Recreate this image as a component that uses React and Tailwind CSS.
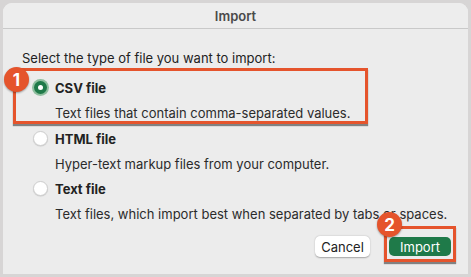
import { useState } from 'react'

const options = [
  { id: 'csv', title: 'CSV file', desc: 'Text files that contain comma-separated values.' },
  { id: 'html', title: 'HTML file', desc: 'Hyper-text markup files from your computer.' },
  { id: 'text', title: 'Text file', desc: 'Text files, which import best when separated by tabs or spaces.' },
]

function Badge({ n, className }) {
  return (
    <div
      className={`absolute w-[25px] h-[25px] rounded-full bg-[#e5542c] text-white text-[17px] font-bold flex items-center justify-center shadow-[0_1px_2px_rgba(0,0,0,0.35)] ${className}`}
    >
      {n}
    </div>
  )
}

function Radio({ checked }) {
  if (checked) {
    return (
      <span className="w-[17px] h-[17px] rounded-full bg-[#8fbf9f] flex items-center justify-center shrink-0">
        <span className="w-[13px] h-[13px] rounded-full bg-[#1f7a49] flex items-center justify-center">
          <span className="w-[5px] h-[5px] rounded-full bg-white" />
        </span>
      </span>
    )
  }
  return (
    <span className="w-[15px] h-[15px] mx-[1px] rounded-full bg-white border border-[#cfcfcf] shadow-[0_0.5px_1px_rgba(0,0,0,0.15)] shrink-0" />
  )
}

function Option({ opt, checked, onSelect, compact }) {
  return (
    <div className="cursor-pointer" onClick={onSelect}>
      <div className="h-[25px] flex items-center gap-[6px]">
        <Radio checked={checked} />
        <span className="font-bold text-[#222]">{opt.title}</span>
      </div>
      <div className={compact ? 'pt-[5px] pl-[23px] text-[#2b2b2b]' : 'h-[25px] flex items-center pl-[23px] text-[#2b2b2b]'}>
        {opt.desc}
      </div>
    </div>
  )
}

export default function App() {
  const [selected, setSelected] = useState('csv')

  return (
    <div className="w-[471px] h-[277px] bg-[#d7d5d5] pt-[3px] pl-[3px] overflow-hidden" style={{ fontFamily: 'Inter, "Noto Sans", sans-serif' }}>
      <div className="w-[465px] h-[271px] bg-[#ececec] rounded-t-[9px] flex flex-col text-[13px] leading-4">
        <div className="h-[26px] shrink-0 border-b border-[#c9c9c9] flex items-center justify-center font-semibold text-[#4a4a4a] bg-[#ededed] rounded-t-[9px]">
          Import
        </div>

        <div className="pl-[19px] pt-[21px] text-[#222]">Select the type of file you want to import:</div>

        <div className="relative mt-[2px] ml-[10px] w-[355px] border-[3px] border-[#e5542c] shadow-[0_2px_1px_rgba(0,0,0,0.45)] pl-[16px] pt-[4px]">
          <Badge n="1" className="-left-[12px] -top-[4px]" />
          <Option opt={options[0]} checked={selected === 'csv'} onSelect={() => setSelected('csv')} compact />
        </div>

        <div className="pl-[29px] mt-[2px]">
          {options.slice(1).map((o) => (
            <Option key={o.id} opt={o} checked={selected === o.id} onSelect={() => setSelected(o.id)} />
          ))}
        </div>

        <div className="flex justify-end items-start gap-[14px] pr-[12px]">
          <button className="mt-[10px] h-[21px] w-[55px] rounded-[5px] bg-white text-[#222] shadow-[0_0.5px_1.5px_rgba(0,0,0,0.3)]">
            Cancel
          </button>
          <div className="relative border-[3px] border-[#e5542c] pt-[8px] pb-[3px] px-[2px] shadow-[0_2px_1px_rgba(0,0,0,0.45)]">
            <Badge n="2" className="-left-[10px] -top-[17px]" />
            <button className="block h-[19px] w-[62px] rounded-[5px] bg-[#1f7a49] text-white">Import</button>
          </div>
        </div>
      </div>
    </div>
  )
}
